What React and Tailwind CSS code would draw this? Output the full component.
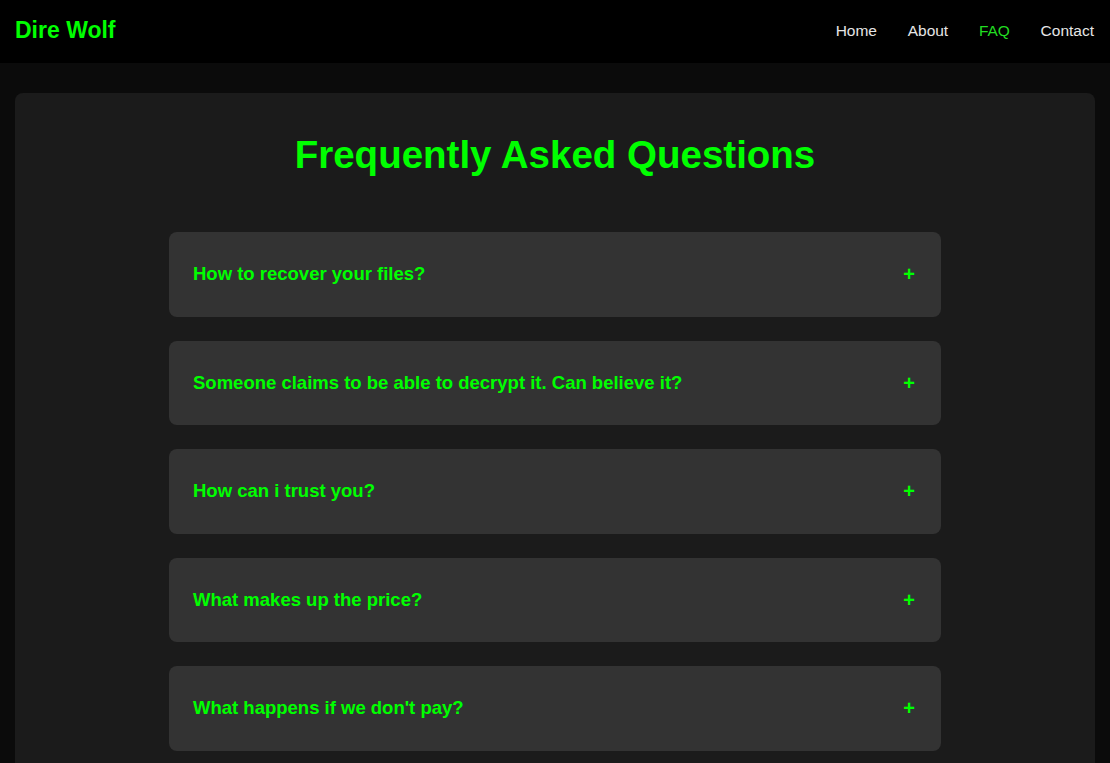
import React from "react";

const faqs = [
  "How to recover your files?",
  "Someone claims to be able to decrypt it. Can believe it?",
  "How can i trust you?",
  "What makes up the price?",
  "What happens if we don't pay?",
];

export default function App() {
  return (
    <div
      className="min-h-screen bg-[#0b0b0b] text-white"
      style={{ fontFamily: '"Liberation Sans", Arial, sans-serif' }}
    >
      <header className="h-[63px] bg-black flex items-center justify-between pl-[15px] pr-[16px] pb-[2px]">
        <div className="text-[23px] font-bold text-[#00ff00] leading-none">Dire Wolf</div>
        <nav className="flex items-center gap-[30.7px] text-[15.5px] leading-none">
          <a className="text-[#e6e6e6]">Home</a>
          <a className="text-[#e6e6e6]">About</a>
          <a className="text-[#22dd22]">FAQ</a>
          <a className="text-[#e6e6e6]">Contact</a>
        </nav>
      </header>
      <main className="px-[15px] pt-[30px]">
        <section className="bg-[#1b1b1b] rounded-lg pt-[40px] pb-10">
          <h1 className="text-center text-[38.5px] font-bold text-[#00ff00] leading-[43px]">
            Frequently Asked Questions
          </h1>
          <div className="w-[772px] mx-auto mt-[56px] flex flex-col gap-[24px]">
            {faqs.map((q) => (
              <div
                key={q}
                className="h-[84.5px] bg-[#333333] rounded-lg flex items-center justify-between pl-6 pr-[26px]"
              >
                <span className="text-[18.5px] font-bold text-[#00ff00]">{q}</span>
                <span className="text-[20px] font-bold text-[#00ff00] leading-none">+</span>
              </div>
            ))}
          </div>
        </section>
      </main>
    </div>
  );
}
